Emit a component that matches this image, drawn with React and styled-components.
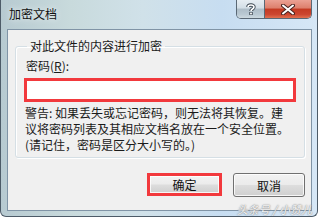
import React from "react";
import styled, { createGlobalStyle } from "styled-components";

const Global = createGlobalStyle`
  html, body { margin: 0; padding: 0; background: #ffffff; }
  body { font-family: "Noto Sans CJK SC", "Noto Sans", sans-serif; }
`;

const Window = styled.div`
  position: relative;
  box-sizing: border-box;
  width: 318px;
  height: 217px;
  border: 1px solid #4d5b68;
  border-top: none;
  border-radius: 0 0 6px 6px;
  background:
    linear-gradient(90deg, #b7cad1 0%, #c8dadc 22%, #d0e1e9 45%, #c7ddf1 70%, #d6e7f6 100%);
  display: flex;
  flex-direction: column;
  padding: 0 5px 5px 6px;
  overflow: hidden;
`;

const TitleBar = styled.div`
  height: 29px;
  display: flex;
  justify-content: space-between;
  align-items: flex-start;
`;

const Title = styled.div`
  font-size: 12px;
  line-height: 14px;
  color: #111;
  padding: 7px 0 0 2px;
  text-shadow: 0 0 6px rgba(255,255,255,0.9);
`;

const Caption = styled.div`
  display: flex;
  border: 1px solid #5a6875;
  border-top: none;
  border-radius: 0 0 5px 5px;
  overflow: hidden;
  height: 19px;
  box-sizing: border-box;
`;

const CapBtn = styled.div`
  width: ${(p) => p.$w}px;
  height: 100%;
  display: flex;
  align-items: center;
  justify-content: center;
  background: ${(p) =>
    p.$close
      ? "linear-gradient(180deg, #eba193 0%, #dd7f6c 45%, #c43a22 50%, #cc4630 80%, #e2704f 100%)"
      : "linear-gradient(180deg, #e6edf2 0%, #d3dee6 45%, #aebdc8 50%, #bac9d3 80%, #cdd9e0 100%)"};
  & + & { border-left: 1px solid #5a6875; }
`;

const Client = styled.div`
  flex: 1;
  box-sizing: border-box;
  border: 1px solid #8094a6;
  background: #f0f0f0;
  display: flex;
  flex-direction: column;
  padding: 9px 6px 11px 7px;
`;

const Group = styled.fieldset`
  margin: 0;
  border: 1px solid #d5dfe5;
  border-radius: 3px;
  box-shadow: inset 1px 1px 0 #ffffff, 1px 1px 0 #ffffff;
  padding: 5px 8px 4px 8px;
  min-width: 0;
`;

const Legend = styled.legend`
  font-size: 12px;
  line-height: 14px;
  color: #1a1a1a;
  padding: 0 3px;
  margin-left: 3px;
`;

const Label = styled.div`
  font-size: 12px;
  line-height: 16px;
  color: #1a1a1a;
  margin: 0 0 4px 2px;
  u { text-decoration: underline; }
`;

const Input = styled.div`
  box-sizing: border-box;
  width: 272px;
  height: 24px;
  border: 3px solid #f2393d;
  background: #ffffff;
`;

const Warning = styled.div`
  font-size: 12px;
  line-height: 16px;
  color: #1a1a1a;
  margin: 3px 0 0 1px;
  white-space: nowrap;
`;

const Buttons = styled.div`
  display: flex;
  justify-content: flex-end;
  align-items: center;
  gap: 11px;
  margin-top: 15px;
`;

const Button = styled.div`
  box-sizing: border-box;
  width: ${(p) => (p.$highlight ? 75 : 72)}px;
  height: ${(p) => (p.$highlight ? 23 : 24)}px;
  margin-top: ${(p) => (p.$highlight ? -1 : 0)}px;
  border: ${(p) => (p.$highlight ? "3px solid #f2393d" : "1px solid #707070")};
  border-radius: ${(p) => (p.$highlight ? 0 : 3)}px;
  background: linear-gradient(180deg, #f2f2f2 0%, #ebebeb 48%, #dddddd 52%, #cfcfcf 100%);
  box-shadow: inset 0 0 0 1px rgba(255,255,255,0.8);
  display: flex;
  align-items: center;
  justify-content: center;
  font-size: 12px;
  color: #111;
`;

const Watermark = styled.div`
  position: absolute;
  right: 5px;
  bottom: 0px;
  font-size: 11px;
  line-height: 13px;
  color: rgba(255,255,255,0.92);
  font-style: italic;
  text-shadow: 0 0 1px #8a8a8a, 0 0 2px #8a8a8a;
`;

export default function App() {
  return (
    <>
      <Global />
      <Window>
        <TitleBar>
          <Title>加密文档</Title>
          <Caption>
            <CapBtn $w={27}>
              <svg width="10" height="12" viewBox="0 0 10 12">
                <path d="M2 4 C2 1.5 8 1.2 8 4 C8 6 5 6 5 8" fill="none" stroke="#3a4550" strokeWidth="3.4" />
                <path d="M2 4 C2 1.5 8 1.2 8 4 C8 6 5 6 5 8" fill="none" stroke="#fff" strokeWidth="1.6" />
                <rect x="3.3" y="9" width="3.4" height="3" fill="#3a4550" />
                <rect x="4.1" y="9.6" width="1.8" height="1.8" fill="#fff" />
              </svg>
            </CapBtn>
            <CapBtn $w={46} $close>
              <svg width="14" height="11" viewBox="0 0 14 11">
                <path d="M2 1.5 L12 9.5 M12 1.5 L2 9.5" stroke="#4a2420" strokeWidth="4" strokeLinecap="round" />
                <path d="M2 1.5 L12 9.5 M12 1.5 L2 9.5" stroke="#fff" strokeWidth="2" strokeLinecap="round" />
              </svg>
            </CapBtn>
          </Caption>
        </TitleBar>
        <Client>
          <Group>
            <Legend>对此文件的内容进行加密</Legend>
            <Label>
              密码(<u>R</u>):
            </Label>
            <Input />
            <Warning>
              警告: 如果丢失或忘记密码，则无法将其恢复。建
              <br />
              议将密码列表及其相应文档名放在一个安全位置。
              <br />
              (请记住，密码是区分大小写的。)
            </Warning>
          </Group>
          <Buttons>
            <Button $highlight>确定</Button>
            <Button>取消</Button>
          </Buttons>
        </Client>
        <Watermark>头条号 / 小赞儿</Watermark>
      </Window>
    </>
  );
}
